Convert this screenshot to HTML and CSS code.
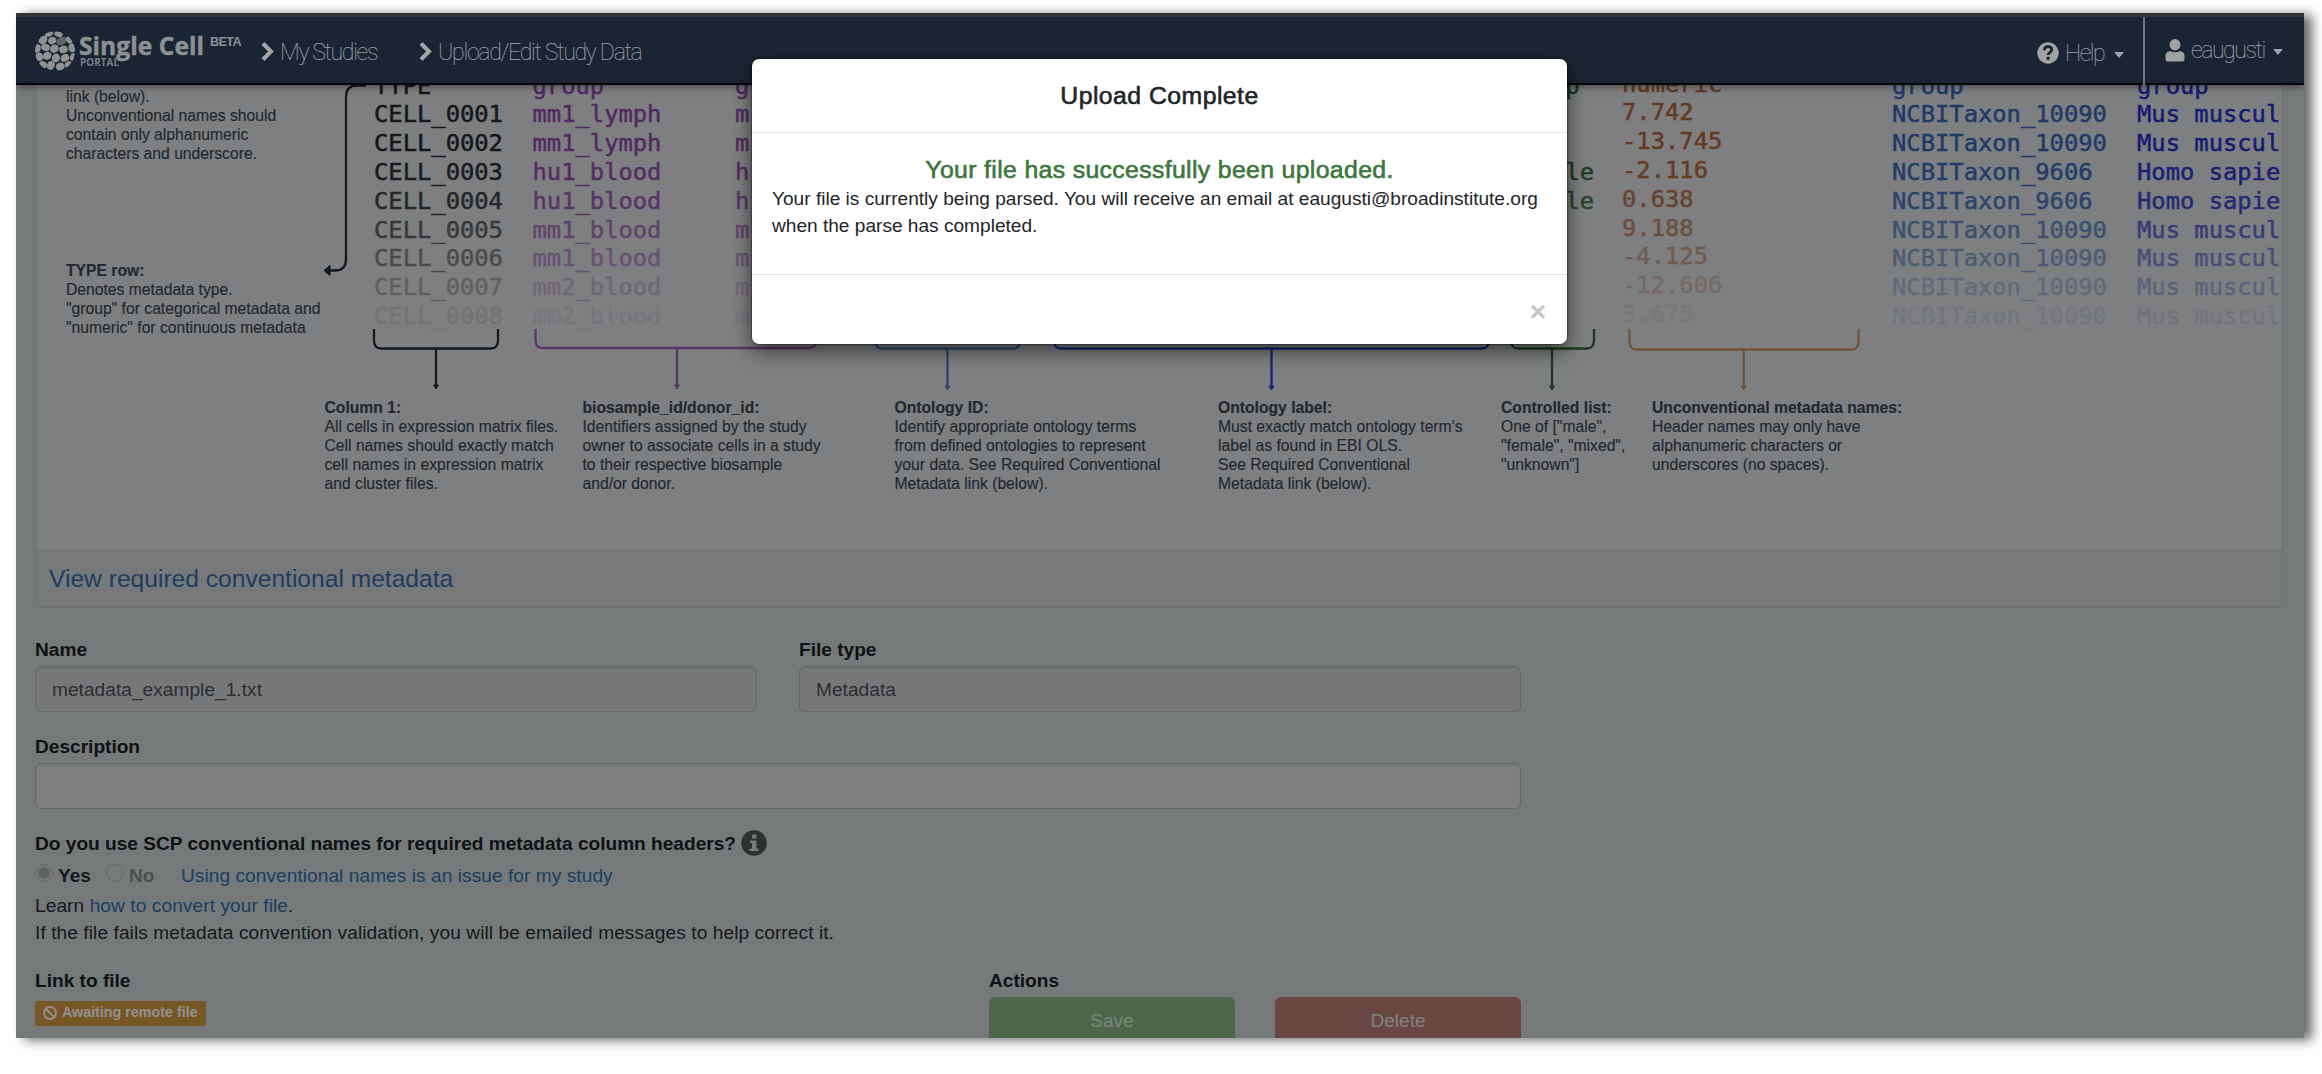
FILE: index.html
```html
<!DOCTYPE html>
<html lang="en">
<head>
<meta charset="utf-8">
<title>Single Cell Portal</title>
<link rel="stylesheet" href="styles.css">
</head>
<body>
<div class="window">
  <header class="nav">
    <a class="brand">
      <svg class="brand-logo" width="164" height="44" viewBox="34 29 164 44">
        <defs><clipPath id="disc"><circle cx="55" cy="51.3" r="20"/></clipPath></defs>
        <g clip-path="url(#disc)" fill="#8f9192">
          <ellipse cx="49" cy="34" rx="4.300" ry="2.700" transform="rotate(-20 49 34)"/><ellipse cx="58.500" cy="34" rx="4.300" ry="2.800" transform="rotate(15 58 34)"/>
          <ellipse cx="43" cy="40" rx="4.800" ry="3.800" transform="rotate(-40 43 40)"/><ellipse cx="52" cy="40.500" rx="4.200" ry="3.500" transform="rotate(-25 52 40)"/>
          <ellipse cx="61.500" cy="41" rx="5.500" ry="3.900" fill="#5f6467" transform="rotate(-25 61.5 41)"/><ellipse cx="69.500" cy="40" rx="3.200" ry="4" transform="rotate(-40 69.5 40)"/>
          <ellipse cx="37.500" cy="48.500" rx="3.300" ry="4.300" transform="rotate(15 37.5 48)"/><ellipse cx="45.500" cy="47.500" rx="4.400" ry="3.600" transform="rotate(20 46 47.5)"/>
          <ellipse cx="54.500" cy="49" rx="4.500" ry="4" transform="rotate(-40 54 49)"/><ellipse cx="63.500" cy="49.500" rx="4.400" ry="3.700" transform="rotate(-15 63 49.5)"/><ellipse cx="72" cy="48" rx="3.500" ry="4.400" transform="rotate(-10 72 48)"/>
          <ellipse cx="39" cy="57" rx="3.900" ry="4.300" transform="rotate(-20 38.5 56)"/><ellipse cx="47.300" cy="55.900" rx="4.500" ry="3.900" transform="rotate(-35 47 56)"/>
          <ellipse cx="56.300" cy="58" rx="4" ry="4.500" transform="rotate(25 56 57)"/><ellipse cx="65" cy="57.900" rx="4.500" ry="3.700" transform="rotate(-30 65 58)"/><ellipse cx="73" cy="57" rx="3" ry="4" transform="rotate(20 73 57)"/>
          <ellipse cx="43" cy="64.700" rx="4.200" ry="3.300" transform="rotate(25 43 65)"/><ellipse cx="51" cy="65.500" rx="3.800" ry="4.400" transform="rotate(20 51 65)"/>
          <ellipse cx="60" cy="66.500" rx="4.400" ry="3.800" transform="rotate(-20 60 66)"/><ellipse cx="68.500" cy="65" rx="3.800" ry="3.300" transform="rotate(-40 68 65)"/>
        </g>
        <text class="logo-name" x="79" y="55" textLength="125">Single Cell</text>
        <text class="logo-sub" x="80" y="65.700" textLength="39">PORTAL</text>
      </svg>
      <span class="beta">BETA</span>
    </a>
    <a class="crumb crumb-studies"><svg width="13" height="19" viewBox="0 0 13 19"><path d="M2 1.500l8 8-8 8" fill="none" stroke="#a3a5a7" stroke-width="4"/></svg><span>My Studies</span></a>
    <a class="crumb crumb-upload"><svg width="13" height="19" viewBox="0 0 13 19"><path d="M2 1.500l8 8-8 8" fill="none" stroke="#a3a5a7" stroke-width="4"/></svg><span>Upload/Edit Study Data</span></a>
    <a class="menu menu-help"><svg width="22" height="22" viewBox="0 0 22 22"><circle cx="11" cy="11" r="10.700" fill="#a0a2a4"/><path d="M7.300 8.200c.2-5 7.600-4.600 7.400-.3-.1 2.500-3.500 2.400-3.500 5" fill="none" stroke="#1a2433" stroke-width="2.800"/><rect x="9.600" y="14.800" width="3" height="3" fill="#1a2433"/></svg><span>Help</span><i class="caret"></i></a>
    <a class="menu menu-user"><svg width="20" height="23" viewBox="0 0 20 23"><ellipse cx="10" cy="5.800" rx="5.400" ry="5.700" fill="#a0a2a4"/><path d="M.5 20.500v-3.500q0-4 4.500-5 5 2.500 10 0 4.500 1 4.500 5v3.500q0 2-2 2h-15q-2 0-2-2z" fill="#a0a2a4"/></svg><span>eaugusti</span><i class="caret"></i></a>
  </header>

  <main class="page">
    <section class="panel">
      <svg class="diagram" width="2245" height="464" viewBox="37 85 2245 464">
        <g class="line" stroke="#15181c">
          <path d="M366 85.500h-9q-11 0-11 11v163q0 11-11 11h-9"/><path d="M330 265.500l-6 5 6 5z" fill="#15181c" stroke-width="1"/>
          <path d="M374 329v11q0 8.500 7 8.500h110q7 0 7-8.500v-11M436 349v38"/><path d="M433.500 385h5l-2.500 4z" stroke-width="1" fill="#15181c"/>
        </g>
        <g class="line" stroke="#5a3766"><path d="M535.500 329v11q0 8 7 8h266q8 0 8-8v-11M677 348v39"/><path d="M674.500 385h5l-2.500 4z" stroke-width="1" fill="#5a3766"/></g>
        <g class="line" stroke="#2c466e"><path d="M875 329v11q0 8.500 7 8.500h131q7 0 7-8.500v-11M947.500 349v39"/><path d="M945 386h5l-2.500 4z" stroke-width="1" fill="#2c466e"/></g>
        <g class="line" stroke="#1b2472"><path d="M1054 329v11q0 8.500 7 8.500h421q7 0 7-8.500v-11M1271.500 349v39"/><path d="M1269 386h5l-2.500 4z" stroke-width="1" fill="#1b2472"/></g>
        <g class="line" stroke="#1c3a1e"><path d="M1511 329v11q0 8.500 7 8.500h69q7 0 7-8.500v-11M1552 349v39"/><path d="M1549.500 386h5l-2.500 4z" stroke-width="1" fill="#1c3a1e"/></g>
        <g class="line" stroke="#70543a"><path d="M1629.500 329v12q0 8.500 7 8.500h215q7 0 7-8.500v-12M1743.700 349v39"/><path d="M1741.200 386h5l-2.500 4z" stroke-width="1" fill="#70543a"/></g>

        <g class="mono">
          <g><text x="374" y="93.500" class="cell">TYPE</text><text x="532.500" y="93.500" class="sample">group</text><text x="735" y="93.500" class="sample">group</text><text x="1508" y="93.500" class="sex">group</text><text x="1622" y="91.500" class="num">numeric</text><text x="1892" y="93.500" class="taxon">group</text><text x="2137" y="93.500" class="species">group</text></g>
          <g><text x="374" y="122.300" class="cell">CELL_0001</text><text x="532.500" y="122.300" class="sample">mm1_lymph</text><text x="735" y="122.300" class="sample">m</text><text x="1622" y="120.300" class="num">7.742</text><text x="1892" y="122.300" class="taxon">NCBITaxon_10090</text><text x="2137" y="122.300" class="species">Mus muscul</text></g>
          <g><text x="374" y="151.100" class="cell">CELL_0002</text><text x="532.500" y="151.100" class="sample">mm1_lymph</text><text x="735" y="151.100" class="sample">m</text><text x="1622" y="149.100" class="num">-13.745</text><text x="1892" y="151.100" class="taxon">NCBITaxon_10090</text><text x="2137" y="151.100" class="species">Mus muscul</text></g>
          <g opacity=".95"><text x="374" y="179.900" class="cell">CELL_0003</text><text x="532.500" y="179.900" class="sample">hu1_blood</text><text x="735" y="179.900" class="sample">h</text><text x="1565.500" y="179.900" class="sex">le</text><text x="1622" y="177.900" class="num">-2.116</text><text x="1892" y="179.900" class="taxon">NCBITaxon_9606</text><text x="2137" y="179.900" class="species">Homo sapie</text></g>
          <g opacity=".85"><text x="374" y="208.700" class="cell">CELL_0004</text><text x="532.500" y="208.700" class="sample">hu1_blood</text><text x="735" y="208.700" class="sample">h</text><text x="1565.500" y="208.700" class="sex">le</text><text x="1622" y="206.700" class="num">0.638</text><text x="1892" y="208.700" class="taxon">NCBITaxon_9606</text><text x="2137" y="208.700" class="species">Homo sapie</text></g>
          <g opacity=".68"><text x="374" y="237.500" class="cell">CELL_0005</text><text x="532.500" y="237.500" class="sample">mm1_blood</text><text x="735" y="237.500" class="sample">m</text><text x="1622" y="235.500" class="num">9.188</text><text x="1892" y="237.500" class="taxon">NCBITaxon_10090</text><text x="2137" y="237.500" class="species">Mus muscul</text></g>
          <g opacity=".5"><text x="374" y="266.300" class="cell">CELL_0006</text><text x="532.500" y="266.300" class="sample">mm1_blood</text><text x="735" y="266.300" class="sample">m</text><text x="1622" y="264.300" class="num">-4.125</text><text x="1892" y="266.300" class="taxon">NCBITaxon_10090</text><text x="2137" y="266.300" class="species">Mus muscul</text></g>
          <g opacity=".29"><text x="374" y="295.100" class="cell">CELL_0007</text><text x="532.500" y="295.100" class="sample">mm2_blood</text><text x="735" y="295.100" class="sample">m</text><text x="1622" y="293.100" class="num">-12.606</text><text x="1892" y="295.100" class="taxon">NCBITaxon_10090</text><text x="2137" y="295.100" class="species">Mus muscul</text></g>
          <g opacity=".1"><text x="374" y="323.900" class="cell">CELL_0008</text><text x="532.500" y="323.900" class="sample">mm2_blood</text><text x="735" y="323.900" class="sample">m</text><text x="1622" y="321.900" class="num">3.675</text><text x="1892" y="323.900" class="taxon">NCBITaxon_10090</text><text x="2137" y="323.900" class="species">Mus muscul</text></g>
        </g>

        <g class="note">
          <text y="101.700"><tspan x="66">link (below).</tspan><tspan x="66" dy="19.100">Unconventional names should</tspan><tspan x="66" dy="19.100">contain only alphanumeric</tspan><tspan x="66" dy="19.100">characters and underscore.</tspan></text>
          <text y="276"><tspan x="66" class="b">TYPE row:</tspan><tspan x="66" dy="19.100">Denotes metadata type.</tspan><tspan x="66" dy="19.100">"group" for categorical metadata and</tspan><tspan x="66" dy="19.100">"numeric" for continuous metadata</tspan></text>
          <text y="413"><tspan x="324.500" class="b">Column 1:</tspan><tspan x="324.500" dy="19.100">All cells in expression matrix files.</tspan><tspan x="324.500" dy="19.100">Cell names should exactly match</tspan><tspan x="324.500" dy="19.100">cell names in expression matrix</tspan><tspan x="324.500" dy="19.100">and cluster files.</tspan></text>
          <text y="413"><tspan x="582.500" class="b">biosample_id/donor_id:</tspan><tspan x="582.500" dy="19.100">Identifiers assigned by the study</tspan><tspan x="582.500" dy="19.100">owner to associate cells in a study</tspan><tspan x="582.500" dy="19.100">to their respective biosample</tspan><tspan x="582.500" dy="19.100">and/or donor.</tspan></text>
          <text y="413"><tspan x="894.500" class="b">Ontology ID:</tspan><tspan x="894.500" dy="19.100">Identify appropriate ontology terms</tspan><tspan x="894.500" dy="19.100">from defined ontologies to represent</tspan><tspan x="894.500" dy="19.100">your data. See Required Conventional</tspan><tspan x="894.500" dy="19.100">Metadata link (below).</tspan></text>
          <text y="413"><tspan x="1218" class="b">Ontology label:</tspan><tspan x="1218" dy="19.100">Must exactly match ontology term's</tspan><tspan x="1218" dy="19.100">label as found in EBI OLS.</tspan><tspan x="1218" dy="19.100">See Required Conventional</tspan><tspan x="1218" dy="19.100">Metadata link (below).</tspan></text>
          <text y="413"><tspan x="1501" class="b">Controlled list:</tspan><tspan x="1501" dy="19.100">One of ["male",</tspan><tspan x="1501" dy="19.100">"female", "mixed",</tspan><tspan x="1501" dy="19.100">"unknown"]</tspan></text>
          <text y="413"><tspan x="1652" class="b">Unconventional metadata names:</tspan><tspan x="1652" dy="19.100">Header names may only have</tspan><tspan x="1652" dy="19.100">alphanumeric characters or</tspan><tspan x="1652" dy="19.100">underscores (no spaces).</tspan></text>
        </g>
      </svg>
      <div class="panel-footer"><a>View required conventional metadata</a></div>
    </section>

    <form class="form">
      <div class="row">
        <div class="field"><label>Name</label><div class="input readonly">metadata_example_1.txt</div></div>
        <div class="field"><label>File type</label><div class="input readonly">Metadata</div></div>
      </div>
      <div class="field"><label>Description</label><div class="input"></div></div>
      <div class="convention">
        <div class="question"><label>Do you use SCP conventional names for required metadata column headers?</label><svg width="26" height="26" viewBox="0 0 26 26"><circle cx="13" cy="13" r="12.800" fill="#2e3030"/><path d="M11 4.500h4.500v4h-4.500zM9 10.500h6.500v8h2v2.500h-9v-2.500h2.500v-5.500h-2z" fill="#777b7b"/></svg></div>
        <div class="choices"><i class="radio on"></i><b>Yes</b><i class="radio"></i><b class="off">No</b><a>Using conventional names is an issue for my study</a></div>
        <p>Learn <a>how to convert your file</a>.</p>
        <p>If the file fails metadata convention validation, you will be emailed messages to help correct it.</p>
      </div>
      <div class="bottom">
        <div class="link-file"><label>Link to file</label><span class="badge"><svg width="14" height="14" viewBox="0 0 14 14"><path d="M2.500 2.500l9 9M13 7a6 6 0 1 1-12 0a6 6 0 0 1 12 0z" fill="none" stroke="#929190" stroke-width="1.800"/></svg>Awaiting remote file</span></div>
        <div class="actions"><label>Actions</label><div class="buttons"><span class="btn save">Save</span><span class="btn delete">Delete</span></div></div>
      </div>
    </form>
  </main>
</div>

<div class="modal">
  <div class="modal-header">Upload Complete</div>
  <div class="modal-body"><div class="success">Your file has successfully been uploaded.</div><p>Your file is currently being parsed. You will receive an email at eaugusti@broadinstitute.org when the parse has completed.</p></div>
  <div class="modal-footer"><span class="close">×</span></div>
</div>
</body>
</html>
```
FILE: styles.css
```css
* { box-sizing: border-box; }
body { margin: 0; height: 1074px; padding: 13px 18px 36px 16px; background: #fff; overflow: hidden; font: 19.1px/27.3px "Liberation Sans", Arial, sans-serif; color: #15181b; }
p { margin: 0; }
a { color: #1d3d5f; }
label, b { font-weight: bold; }
label { display: block; height: 27px; line-height: 27px; color: #0f1214; }

.window { height: 1025px; display: flex; flex-direction: column; overflow: hidden; background: #757979; box-shadow: 8px 2px 11px rgba(0, 0, 0, .6); }

.nav { position: relative; flex: none; height: 72px; display: flex; align-items: stretch; background: #1a2433; border-top: 4px solid #343537; border-bottom: 2px solid #05070a; box-shadow: 0 1px 8px rgba(0, 0, 0, .5); }
.brand { flex: none; display: flex; width: 245px; padding: 12px 0 0 18px; }
.brand-logo { flex: none; overflow: visible; }
.logo-name { font: bold 24.5px "Open Sans", sans-serif; fill: #8d9093; stroke: #8d9093; stroke-width: .5; }
.logo-sub { font: bold 9.8px "Open Sans", sans-serif; fill: #7b7f83; }
.beta { margin: 6px 0 0 12px; font-size: 12.6px; line-height: 15px; font-weight: bold; letter-spacing: -.6px; color: #8d9093; }
.crumb, .menu { flex: none; display: flex; align-items: center; color: #989b9f; font: 100 23px/26px Roboto, sans-serif; letter-spacing: -1.15px; padding-top: 3px; white-space: nowrap; -webkit-text-stroke: .2px #989b9f; }
.crumb svg, .menu svg { flex: none; }
.crumb svg { margin-right: 6px; }
.crumb span { padding-top: 2px; }
.crumb-studies { width: 158px; letter-spacing: -1.3px; }
.crumb-upload { width: 230px; letter-spacing: -1.25px; }
.menu-help { width: 108px; margin-left: auto; border-right: 2px solid #6f757c; margin-bottom: -2px; }
.menu-user { width: 159px; padding: 2px 0 2px 20px; }
.menu svg { margin-right: 6px; }
.menu span { padding-top: 2px; }
.menu-help span { width: 49px; letter-spacing: -1.5px; }
.menu-user span { width: 82px; letter-spacing: -1.4px; }
.caret { margin-top: 4px; border: 5.5px solid transparent; border-top: 6px solid #a0a2a4; border-bottom: 0; }

.page { flex: none; padding: 0 21px 0 20px; }
.panel { height: 523px; background: #7e7f80; border: 1px solid #6e7272; border-top: 0; border-radius: 0 0 4px 4px; }
.diagram { display: block; }
.line { fill: none; stroke-width: 2.3; }
.mono { font: 23.8px "DejaVu Sans Mono", monospace; stroke-width: .5; }
.cell { fill: #15171a; stroke: #15171a; }
.sample { fill: #522a62; stroke: #522a62; }
.sex { fill: #1c3a1e; stroke: #1c3a1e; }
.num { fill: #65391f; stroke: #65391f; }
.taxon { fill: #1e3a68; stroke: #1e3a68; }
.species { fill: #161b74; stroke: #161b74; }
.note { font: 15.7px "Liberation Sans", Arial, sans-serif; fill: #22282f; stroke: #22282f; stroke-width: .15; }
.note .b { font-weight: bold; }
.panel-footer { height: 58px; padding: 16px 12px; background: #777879; font-size: 24.6px; line-height: 28px; }

.form { width: 1486px; margin-left: -1px; padding-top: 28px; }
.row { display: grid; grid-template-columns: 722px 722px; gap: 42px; margin-bottom: 21px; }
.input { height: 46px; margin-top: 3px; padding: 0 16px; line-height: 45px; border: 1.5px solid #656869; border-radius: 6px; background: #7e7f80; color: #2c2e31; box-shadow: inset 0 1.5px 2px rgba(0, 0, 0, .08); letter-spacing: .04px; }
.readonly { background: #767779; }
.convention { padding-top: 20px; }
.convention p { letter-spacing: .085px; }
.choices a { letter-spacing: .06px; }
.question { display: flex; align-items: center; gap: 5px; height: 28px; margin-bottom: -1px; }
.choices { display: flex; height: 33px; padding-top: 6px; margin-bottom: 3px; }
.radio { width: 18px; height: 18px; margin: 2px 5px 0 0; border: 1.5px solid #686c6c; border-radius: 50%; }
.radio.on { background: radial-gradient(circle, #5e6262 0 5.3px, #757979 6px); }
.choices b { width: 48px; }
.choices b.off { width: 52px; color: #4c5050; }
.bottom { display: flex; justify-content: space-between; padding-top: 20px; }
.badge { display: flex; align-items: center; gap: 5px; width: 171px; height: 25px; margin-top: 7px; padding-left: 8px; border-radius: 3px; background: #785727; color: #929190; font-size: 14.3px; font-weight: bold; white-space: nowrap; }
.actions { width: 532px; }
.buttons { display: flex; justify-content: space-between; margin-top: 3px; }
.btn { width: 246px; height: 46px; line-height: 47px; border-radius: 6px; text-align: center; color: #7f837f; }
.save { background: #4e664c; }
.delete { background: #6a4745; }

.modal { position: absolute; left: 752px; top: 59px; width: 815px; height: 285px; display: flex; flex-direction: column; background: #fff; border-radius: 7px; box-shadow: 0 6px 20px rgba(0, 0, 0, .6), 0 0 2px #000; color: #222428; }
.modal-header { flex: none; height: 74px; padding-top: 23px; text-align: center; font-size: 24.8px; line-height: 28px; letter-spacing: .45px; -webkit-text-stroke: .6px #222428; border-bottom: 1.5px solid #e2e4e4; }
.modal-body { flex: none; height: 142px; padding: 23px 20px; border-bottom: 1.5px solid #e2e4e4; }
.success { text-align: center; font-size: 24.8px; line-height: 28px; height: 29px; letter-spacing: .35px; color: #3c763d; -webkit-text-stroke: .6px #3c763d; }
.modal-footer { display: flex; justify-content: flex-end; padding: 23px 21px; }
.close { font-size: 28px; font-weight: bold; color: #c4c6c8; }
```
